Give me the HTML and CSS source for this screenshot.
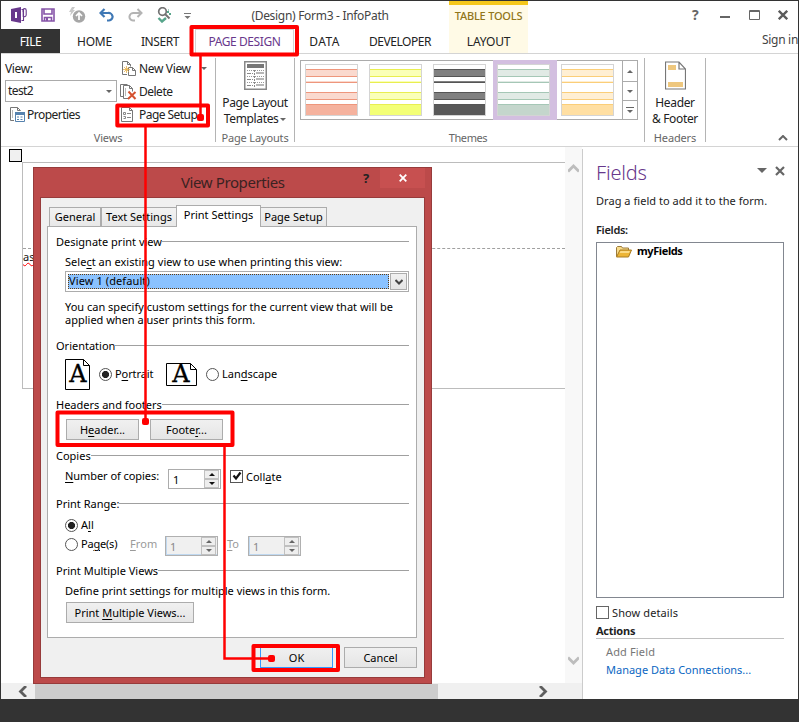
FILE: index.html
```html
<!DOCTYPE html>
<html lang="en">
<head>
<meta charset="utf-8">
<title>(Design) Form3 - InfoPath</title>
<link rel="stylesheet" href="styles.css">
</head>
<body>
<div class="window">
  <header class="titlebar">
    <div class="qat">
      <svg width="16" height="16" viewBox="0 0 16 16"><path d="M0 2l10-2v16L0 14z" fill="#68388c"/><path d="M4 5h2v6H4z" fill="#fff"/><path d="M10.5 2.500h2v11h-2M12 5V3.200a1.600 1.600 0 0 1 3.200 0V8a2 2 0 0 1-3 1.500V5" fill="none" stroke="#68388c" stroke-width="1.100"/></svg>
      <svg width="14" height="14" viewBox="0 0 14 14"><path d="M1 1h12v12H1zM3 1v5h8V1M3.500 13V9.500h7V13" fill="none" stroke="#8654a8" stroke-width="1.600"/><path d="M5 10h2v3H5z" fill="#8654a8"/></svg>
      <svg width="17" height="16" viewBox="0 0 17 16"><path d="M3 0L0 5h2L1 9l5-6H4l2-3z" fill="#c8c8c8"/><circle cx="10" cy="9.500" r="6.200" fill="#a6a6a6"/><path d="M10 13V6.500M7 9l3-3 3 3" fill="none" stroke="#fff" stroke-width="1.700"/></svg>
      <svg width="15" height="14" viewBox="0 0 15 14"><path d="M5.500 1L1.500 5l4 4M2 5h7a4 3.700 0 0 1 1 7.500H8" fill="none" stroke="#3f78b5" stroke-width="2.200"/></svg>
      <svg width="15" height="14" viewBox="0 0 15 14"><path d="M9.500 1l4 4-4 4M13 5H6a4 3.700 0 0 0-1 7.500h2" fill="none" stroke="#b4b4b4" stroke-width="2"/></svg>
      <svg width="15" height="16" viewBox="0 0 15 16"><circle cx="5.500" cy="4.500" r="3.800" fill="none" stroke="#737373" stroke-width="1.700"/><path d="M8 7l4.500 4.500" stroke="#737373" stroke-width="2"/><path d="M1.500 11l3.500 3.500L9 11" fill="none" stroke="#57a58b" stroke-width="2.400"/><path d="M10 4h2v2h-2zM12 6h2v2h-2zM11 2.500h1v1h-1z" fill="#57a58b"/></svg>
      <svg width="7" height="7" viewBox="0 0 7 7"><path d="M0 .5h7" stroke="#777"/><path d="M.5 3h6l-3 3z" fill="#777"/></svg>
    </div>
    <div class="caption">(Design) Form3 - InfoPath</div>
    <div class="tabletools">TABLE TOOLS</div>
    <div class="controls">
      <b>?</b>
      <svg width="10" height="10" viewBox="0 0 10 10"><path d="M0 7h10" stroke="#666" stroke-width="2"/></svg>
      <svg width="11" height="10" viewBox="0 0 11 10"><path d="M.5.500h10v9H.5zM.5 1.500h10" fill="none" stroke="#666"/></svg>
      <svg width="10" height="10" viewBox="0 0 10 10"><path d="M.8.800l8.400 8.400M9.200.800L.8 9.200" stroke="#5b5b5b" stroke-width="2.300"/></svg>
    </div>
  </header>
  <nav class="tabs">
    <span class="file">FILE</span><span class="home">HOME</span><span class="insert">INSERT</span><span class="active">PAGE DESIGN</span><span class="data">DATA</span><span class="dev">DEVELOPER</span><span class="layout">LAYOUT</span><span class="signin">Sign in</span>
  </nav>
  <section class="ribbon">
    <div class="group views">
      <div class="cols">
        <div class="left">
          <div class="row">View:</div>
          <div class="select">test2<i class="tri"></i></div>
          <div class="row props"><svg width="15" height="15" viewBox="0 0 15 15"><path d="M4 13.500H.5V.500h7l3 3M7.500.500v3h3M2 4h1M2 6h1M2 8h1M2 10h1" fill="none" stroke="#777"/><path d="M5.500 5.500h9v9h-9z" fill="#fff" stroke="#5682ae"/><path d="M5 5h10v3H5z" fill="#5682ae"/><path d="M7 10h2M10.500 10h2M7 12.500h2M10.500 12.500h2" stroke="#5682ae"/></svg>Properties</div>
        </div>
        <div class="right">
          <div class="row"><svg width="15" height="15" viewBox="0 0 15 15"><path d="M6 13.500H1.500V.500h5l3 3v2M6.500.500v3h3" fill="none" stroke="#777"/><path d="M7.500 6.500h4l3 3v5h-7zM11.500 6.500v3h3" fill="#fff" stroke="#777"/><path d="M5.500 5v7M2 8.500h7M3 6l5 5M8 6l-5 5" stroke="#e6b04a" stroke-width=".8"/></svg><span>New View</span><i class="tri nv"></i></div>
          <div class="row"><svg width="17" height="16" viewBox="0 0 17 16"><path d="M8 14.500H3.500V1.500h6l3 3v3M9.500 1.500v3h3M3 12.500H.5V.500h7M5 5h1M5 7h1M5 9h1M5 11h1" fill="none" stroke="#777"/><path d="M8.500 7.500l7 7.500M15.500 8L8 15" stroke="#d5522f" stroke-width="2"/></svg><span>Delete</span></div>
          <div class="row"><svg width="13" height="15" viewBox="0 0 13 15"><path d="M.5.500h8l3 3v11H.5zM8.500.500v3h3" fill="#fff" stroke="#777"/><path d="M2.500 5.500h2v2h-2zM2.500 9.500h2v2h-2M6 6.500h4M6 10.500h4" fill="none" stroke="#888"/></svg><span>Page Setup</span></div>
        </div>
      </div>
      <div class="label">Views</div>
    </div>
    <div class="group layouts">
      <div class="big"><svg width="23" height="29" viewBox="0 0 23 29"><path d="M.75.750h21.500v27.500H.75z" fill="#fff" stroke="#888" stroke-width="1.500"/><path d="M3 3h17v4H3z" fill="#777"/><path d="M3 9.500h17M3 15.500h17M3 21.500h17" stroke="#999" stroke-dasharray="1 1"/><path d="M12 11h8v2h-8zM12 17h8v2h-8zM12 23h8v2h-8z" fill="#b7b7b7"/><path d="M3 12.500h6M3 18.500h6M3 24.500h6" stroke="#888" stroke-dasharray="4 1"/><path d="M10.500 9v17" stroke="#888" stroke-dasharray="2 1"/></svg>
      <p>Page Layout<br>Templates <i class="tri"></i></p></div>
      <div class="label">Page Layouts</div>
    </div>
    <div class="group themes">
      <div class="gallery">
        <div class="item red"><div class="thumb"><i></i><i></i><i></i><i></i></div></div>
        <div class="item yellow"><div class="thumb"><i></i><i></i><i></i><i></i></div></div>
        <div class="item dark"><div class="thumb"><i></i><i></i><i></i><i></i></div></div>
        <div class="item green selected"><div class="thumb"><i></i><i></i><i></i><i></i></div></div>
        <div class="item orange"><div class="thumb"><i></i><i></i><i></i><i></i></div></div>
        <div class="scroller"><span><i class="tri up"></i></span><span><i class="tri"></i></span><span><i class="bar"></i><i class="tri"></i></span></div>
      </div>
      <div class="label">Themes</div>
    </div>
    <div class="group headers">
      <div class="big"><svg width="21" height="29" viewBox="0 0 21 29"><path d="M.5 1h13.500L20.500 8v20H.5zM14 1v7h6.500" fill="#fff" stroke="#777" stroke-width="1.200"/><path d="M3 4h8v5H3zM3 21h15v5H3z" fill="#eec77e"/></svg>
      <p>Header<br>&amp; Footer</p></div>
      <div class="label">Headers</div>
    </div>
    <div class="collapse"><svg width="10" height="6" viewBox="0 0 10 6"><path d="M1 5l4-4 4 4" fill="none" stroke="#666" stroke-width="2"/></svg></div>
  </section>
  <main class="work">
    <div class="canvas">
      <div class="handle"></div>
      <div class="page"><div class="pagetop"></div><div class="pagebody"><span>as</span></div></div>
    </div>
    <div class="vscroll">
      <svg width="11" height="9" viewBox="0 0 11 9"><path d="M0 7.500L5.500 2 11 7.500" fill="none" stroke="#bdbdbd" stroke-width="2.800"/></svg>
      <svg width="11" height="9" viewBox="0 0 11 9"><path d="M0 1.500L5.500 7 11 1.500" fill="none" stroke="#bdbdbd" stroke-width="2.800"/></svg>
    </div>
    <div class="hscroll">
      <svg width="9" height="11" viewBox="0 0 9 11"><path d="M8 0L2.500 5.500 8 11" fill="none" stroke="#5e5e5e" stroke-width="2.800"/></svg>
      <div class="hthumb"></div>
      <svg width="9" height="11" viewBox="0 0 9 11"><path d="M1 0l5.500 5.500L1 11" fill="none" stroke="#5e5e5e" stroke-width="2.800"/></svg>
    </div>
    <aside class="panel">
      <div class="phead"><h1>Fields</h1><i class="tri"></i><svg width="10" height="10" viewBox="0 0 10 10"><path d="M1 1l8 8M9 1L1 9" stroke="#666" stroke-width="2.200"/></svg></div>
      <p class="hint">Drag a field to add it to the form.</p>
      <p class="flabel">Fields:</p>
      <div class="tree"><svg width="16" height="13" viewBox="0 0 16 13"><path d="M.5 11.500v-9l1-1h4l1 1.500h6v3" fill="#f8dc8c" stroke="#9c7b3b"/><path d="M.5 12L4 5h11.500l-3 7z" fill="#edb536" stroke="#a97c22"/><path d="M4.500 6H14l-1 2H3.500z" fill="#fbdb86"/></svg><b>myFields</b></div>
      <label class="details"><i></i>Show details</label>
      <h2>Actions</h2>
      <p class="add">Add Field</p>
      <p class="manage">Manage Data Connections...</p>
    </aside>
  </main>
</div>

<div class="dialog">
  <div class="dtitle"><span class="dname">View Properties</span><b>?</b><span class="dclose"><svg width="8" height="8" viewBox="0 0 8 8"><path d="M.7.700l6.600 6.600M7.300.700L.7 7.300" stroke="#fff" stroke-width="1.800"/></svg></span></div>
  <div class="dbody">
    <div class="dtabs"><span class="t1">General</span><span class="t2">Text Settings</span><span class="t3">Print Settings</span><span class="t4">Page Setup</span></div>
    <div class="sheet">
      <section class="s1">
        <h3>Designate print view</h3>
        <p>Sele<u>c</u>t an existing view to use when printing this view:</p>
        <div class="combo"><span>View 1 (default)</span><i><svg width="8" height="6" viewBox="0 0 8 6"><path d="M.5 1L4 4.500 7.500 1" fill="none" stroke="#444" stroke-width="2"/></svg></i></div>
        <p class="info">You can specify custom settings for the current view that will be<br>applied when a user prints this form.</p>
      </section>
      <section class="s2">
        <h3>Orientation</h3>
        <div class="line">
          <svg width="25" height="31" viewBox="0 0 25 31"><path d="M.5.500h18l6 6v24H.5zM18.500.500v6h6" fill="#fff" stroke="#000"/><text x="12.800" y="23" class="glyph">A</text></svg>
          <i class="radio on"></i><span class="portrait">P<u>o</u>rtrait</span>
          <svg width="31" height="23" viewBox="0 0 31 23"><path d="M.5.500h24l6 6v16H.5zM24.500.500v6h6" fill="#fff" stroke="#000"/><text x="14.800" y="19" class="glyph">A</text></svg>
          <i class="radio"></i><span>Lan<u>d</u>scape</span>
        </div>
      </section>
      <section class="s3">
        <h3>Headers and footers</h3>
        <div class="line"><button>H<u>e</u>ader...</button><button>Foote<u>r</u>...</button></div>
      </section>
      <section class="s4">
        <h3>Copies</h3>
        <div class="line"><span class="copies"><u>N</u>umber of copies:</span><span class="spin">1<em><i class="tri up"></i><i class="tri"></i></em></span><i class="check"><svg width="10" height="10" viewBox="0 0 10 10"><path d="M1.500 4.500l2.500 3 4.500-6" fill="none" stroke="#111" stroke-width="2.200"/></svg></i><span class="collate">Coll<u>a</u>te</span></div>
      </section>
      <section class="s5">
        <h3>Print Range:</h3>
        <div class="line all"><i class="radio on"></i><span>A<u>l</u>l</span></div>
        <div class="line pages"><i class="radio"></i><span class="pg">Pa<u>g</u>e(s)</span><span class="dim from"><u>F</u>rom</span><span class="spin off">1<em><i class="tri up"></i><i class="tri"></i></em></span><span class="dim to"><u>T</u>o</span><span class="spin off">1<em><i class="tri up"></i><i class="tri"></i></em></span></div>
      </section>
      <section class="s6">
        <h3>Print Multiple Views</h3>
        <p>Define print settings for multiple views in this form.</p>
        <button>Print <u>M</u>ultiple Views...</button>
      </section>
    </div>
    <div class="buttons"><button class="ok">OK</button><button>Cancel</button></div>
  </div>
</div>

<svg class="callouts" width="799" height="722" viewBox="0 0 799 722">
  <g fill="none" stroke="#f00" stroke-width="4" stroke-linejoin="round">
    <rect x="191.500" y="27" width="105.500" height="27.500"/>
    <rect x="117.300" y="105.500" width="90.700" height="20"/>
    <rect x="57.500" y="412.500" width="175" height="32.500"/>
    <rect x="253.500" y="646" width="84.500" height="24"/>
  </g>
  <path d="M200.500 56v61M145.500 127v294M224.500 446v212.500H271" fill="none" stroke="#f00" stroke-width="2.500"/>
  <g fill="#f00"><rect x="197" y="114" width="7" height="7" rx="2"/><rect x="142" y="418" width="7" height="7" rx="2"/><rect x="268" y="655" width="7" height="7" rx="2"/></g>
</svg>
</body>
</html>
```
FILE: styles.css
```css
* { box-sizing: border-box; }
body { margin: 0; width: 799px; height: 722px; overflow: hidden; background: #333; font: 11px/14px "Noto Sans", "Open Sans", sans-serif; color: #000; position: relative; }
p, h1, h2, h3 { margin: 0; font: inherit; }
svg { display: block; flex: none; }
i { font-style: normal; flex: none; }
u { text-decoration: underline; text-underline-offset: 2px; text-decoration-thickness: 1px; }
.tri { display: inline-block; width: 0; height: 0; border: 3px solid transparent; border-top-color: #666; border-bottom: 0; }
.tri.up { border-top: 0; border-bottom: 3px solid #666; }

.window { height: 699px; background: #fff; border: 1px solid #333; border-bottom: 0; display: flex; flex-direction: column; color: #222; }

.titlebar { height: 28px; display: flex; flex: none; }
.qat { width: 190px; display: flex; align-items: center; padding-left: 10px; }
.qat svg:nth-child(2) { margin-left: 14px; }
.qat svg:nth-child(3) { margin-left: 14px; }
.qat svg:nth-child(4) { margin-left: 13px; }
.qat svg:nth-child(5) { margin-left: 14px; }
.qat svg:nth-child(6) { margin-left: 14px; }
.qat svg:nth-child(7) { margin: 2px 0 0 12px; }
.caption { width: 258px; text-align: center; font-size: 12px; letter-spacing: -.3px; line-height: 30px; color: #444; }
.tabletools { width: 79px; background: #fffae6; border-top: 4px solid #f5c71a; text-align: center; line-height: 22px; letter-spacing: -.2px; color: #917619; font-weight: 500; }
.controls { flex: 1; display: flex; align-items: center; padding-left: 164px; color: #666; }
.controls b { font-size: 14px; width: 28px; }
.controls svg:nth-of-type(2) { margin-left: 19px; }
.controls svg:nth-of-type(3) { margin-left: 18px; }

.tabs { height: 25px; flex: none; display: flex; border-bottom: 1px solid #d4d4d4; font-size: 12px; letter-spacing: -.2px; line-height: 25px; }
.tabs span { text-align: center; height: 24px; }
.tabs .file { width: 59px; background: #333; color: #fff; letter-spacing: -.5px; }
.home { width: 69px; }
.insert { width: 62px; letter-spacing: -.43px; }
.tabs .active { width: 99px; margin-left: 4px; height: 25px; background: #fff; border: 1px solid #d4d4d4; border-bottom: 0; line-height: 24px; color: #68388c; letter-spacing: -.42px; }
.data { width: 61px; letter-spacing: .4px; }
.dev { width: 90px; letter-spacing: -.46px; }
.layout { width: 79px; margin-left: 4px; background: #fffae6; }
.tabs .signin { flex: 1; text-align: right; line-height: 21px; letter-spacing: -.3px; color: #444; }

.ribbon { height: 93px; flex: none; display: flex; padding: 4px 0 0; border-bottom: 1px solid #d4d4d4; font-size: 12px; letter-spacing: -.35px; }
.group { height: 84px; border-right: 1px solid #b4b4b4; display: flex; flex-direction: column; }
.label { margin-top: auto; text-align: center; font-size: 11px; line-height: 9px; letter-spacing: -.15px; color: #666; }
.views { width: 215px; }
.cols { display: flex; }
.left { width: 116px; padding-left: 4px; }
.row { height: 23px; display: flex; align-items: center; gap: 3px; line-height: 16px; padding-bottom: 2px; }
.left .row:first-child { padding-bottom: 1px; }
.select { width: 112px; height: 22px; margin: -1px 0 2px; border: 1px solid #ababab; display: flex; align-items: center; justify-content: space-between; padding: 0 4px 0 2px; letter-spacing: -.6px; }
.props { padding-left: 5px; gap: 2px; letter-spacing: -.53px; }
.right { flex: 1; padding-left: 4px; }
.right .row:nth-child(2) { gap: 2px; margin-left: -1px; letter-spacing: -.5px; }
.right .row:nth-child(3) { gap: 5px; letter-spacing: -.55px; }
.right .nv { margin-left: 7px; }
.layouts { width: 79px; }
.big { text-align: center; }
.big svg { margin: 3px auto 5px; }
.big p { line-height: 16px; }
.big .tri { vertical-align: 2px; margin-left: -1px; }
.themes { width: 350px; padding: 2px 0 0 5px; }
.themes .label { letter-spacing: -.4px; padding-right: 8px; }
.gallery { width: 338px; height: 60px; border: 1px solid #ababab; display: flex; }
.item { width: 64px; height: 60px; margin-top: -1px; padding: 4px 6px 4px 4px; }
.item.selected { background: #d3bfe0; }
.thumb { width: 53px; height: 52px; border: 1px solid #d4d4d4; background: #fff; padding-top: 4px; display: flex; flex-direction: column; }
.thumb i { background: var(--light); border: solid var(--edge); border-width: 1px 0; }
.thumb i:nth-child(1) { height: 8px; margin-bottom: 4px; }
.thumb i:nth-child(2) { height: 2px; border-width: 0 0 1px; margin-bottom: 9px; }
.thumb i:nth-child(3) { height: 8px; margin-bottom: 4px; }
.thumb i:nth-child(4) { flex: 1; background: var(--full); border-width: 1px 0 0; }
.red { --light: #fad9ce; --edge: #ee967c; --full: #f5b29e; }
.yellow { --light: #faffb8; --edge: #e9ee50; --full: #f3ff75; }
.dark { --light: #808080; --edge: #555; --full: #595959; }
.green { --light: #e1eae5; --edge: #a5c7b6; --full: #c4d6cc; }
.orange { --light: #ffefd3; --edge: #fbce78; --full: #ffdfa2; }
.scroller { margin-left: auto; width: 15px; border-left: 1px solid #ababab; display: flex; flex-direction: column; }
.scroller span { flex: 1; display: flex; flex-direction: column; align-items: center; justify-content: center; gap: 2px; }
.scroller span:first-child { flex: none; height: 20px; }
.scroller span + span { border-top: 1px solid #ababab; }
.bar { width: 8px; height: 1px; background: #666; }
.headers { width: 61px; }
.collapse { flex: 1; display: flex; align-items: flex-end; justify-content: flex-end; padding: 0 10px 5px 0; }

.work { flex: 1; display: grid; grid-template: 536px 16px / 564px 17px 216px; }
.canvas { overflow: hidden; padding: 2px 0 0 8px; }
.handle { width: 13px; height: 13px; border: 1px solid #000; background: #f0f0f0; }
.page { margin-left: 13px; height: 227px; border: solid #bcbcbc; border-width: 1px 0 1px 1px; }
.pagetop { height: 86px; border-bottom: 1px dashed #a0a0a0; }
.pagebody { padding-top: 1px; color: #111; }
.pagebody span { text-decoration: underline wavy #f00 1px; text-underline-offset: 1px; }
.vscroll { background: #f8f8f8; display: flex; flex-direction: column; align-items: center; justify-content: space-between; padding: 17px 0 18px; }
.hscroll { grid-area: 2 / 1 / 3 / 3; background: #f0f0f0; display: flex; align-items: center; padding-left: 17px; }
.hthumb { width: 403px; height: 15px; background: #cdcdcd; margin: 0 101px 0 8px; }
.panel { grid-area: 1 / 3 / 3 / 4; border-left: 1px solid #ccc; margin-top: 2px; padding: 8px 14px 0 13px; }
.phead { display: flex; align-items: center; height: 32px; }
.phead h1 { font-size: 20px; font-weight: 300; letter-spacing: -.2px; color: #68388c; flex: 1; line-height: 32px; }
.phead .tri { border-width: 5px 5px 0; margin: -5px 8px 0 0; }
.phead svg { margin: -5px -1px 0 0; }
.hint { margin-top: 5px; letter-spacing: .04px; }
.flabel { margin-top: 15px; font-weight: 600; letter-spacing: -.3px; }
.tree { height: 356px; margin-top: 5px; border: 1px solid #828790; display: flex; align-items: flex-start; padding: 1px 0 0 19px; gap: 5px; color: #000; }
.tree svg { margin-top: 1px; }
.tree b { font-weight: 700; letter-spacing: -.4px; }
.details { display: flex; align-items: center; gap: 3px; margin-top: 7px; height: 15px; color: #222; letter-spacing: .1px; }
.details i { width: 13px; height: 13px; border: 1px solid #666; }
.panel h2 { font-weight: 700; letter-spacing: -.25px; line-height: 14px; height: 15px; margin-top: 4px; border-bottom: 1px solid #c0c0c0; color: #222; }
.add { color: #777; padding-left: 10px; margin-top: 6px; letter-spacing: .14px; }
.manage { color: #0a66c2; padding-left: 10px; margin-top: 4px; }

.dialog { position: absolute; left: 33px; top: 167px; width: 399px; height: 517px; background: #bc4a4a; border: 1px solid #973b3b; padding: 0 6px 6px; }
.dtitle { height: 29px; display: flex; }
.dname { padding-left: 141px; box-sizing: content-box; width: 147px; font-size: 15px; letter-spacing: -.4px; line-height: 29px; color: #3a2222; }
.dtitle b { font-size: 13px; line-height: 21px; width: 18px; padding-left: 35px; box-sizing: content-box; color: #222; }
.dclose { width: 45px; height: 20px; background: #c75050; display: flex; align-items: center; justify-content: center; margin-left: -1px; }
.dbody { height: 481px; border: 1px solid #973b3b; background: #f0f0f0; padding: 7px 7px 0 6px; }
.dtabs { height: 21px; display: flex; align-items: flex-end; padding-left: 2px; }
.dtabs span { height: 19px; border: 1px solid #acacac; border-bottom: 0; text-align: center; line-height: 17px; background: linear-gradient(#f2f2f2, #e8e8e8); }
.t1 { width: 52px; }
.t2 { width: 76px; }
.dtabs .t3 { width: 85px; height: 22px; margin: 0 0 -1px -1px; background: #fff; line-height: 18px; z-index: 1; }
.t4 { width: 67px; margin-left: -1px; }
.sheet { height: 412px; border: 1px solid #acacac; background: #fff; padding: 7px 7px 0 8px; }
h3 { display: flex; align-items: center; height: 16px; line-height: 16px; white-space: nowrap; }
h3::after { content: ""; flex: 1; height: 1px; background: #a0a0a0; margin-top: -1px; }
.sheet section > p, .sheet .line { margin-left: 9px; }
.line { display: flex; align-items: center; }
.s1 { height: 104px; }
.s1 p { margin-top: 5px; letter-spacing: .02px; }
.combo { width: 344px; height: 21px; margin: 2px 0 0 9px; border: 1px solid #acacac; display: flex; padding: 1px 1px 1px 2px; gap: 1px; }
.combo span { flex: 1; background: #8ac2ff; outline: 1px dotted #643c10; outline-offset: -1px; margin: 1px 0; line-height: 14px; padding-left: 1px; letter-spacing: .1px; }
.combo i { width: 17px; border: 1px solid #acacac; background: linear-gradient(#f0f0f0, #e5e5e5); display: flex; align-items: center; justify-content: center; }
.s1 .info { line-height: 13px; margin-top: 8px; letter-spacing: 0; }
.s2 { height: 59px; }
.s2 .line { height: 31px; margin-top: 5px; }
.s2 .line > span { margin-top: -1px; }
.glyph { font: 24px "DejaVu Serif", serif; text-anchor: middle; stroke: #000; stroke-width: .3px; }
.radio { width: 13px; height: 13px; border: 1px solid #555; border-radius: 50%; background: #fff; }
.radio.on { background: radial-gradient(circle, #222 0 3.200px, #fff 3.900px); }
.s2 .radio { margin: -1px 3px 0 9px; }
.portrait { width: 51px; letter-spacing: -.1px; }
.s3 { height: 51px; }
.s3 .line { margin: 6px 0 0 10px; gap: 11px; }
button { font: inherit; color: #000; height: 21px; width: 73px; border: 1px solid #acacac; background: linear-gradient(#f0f0f0, #e5e5e5); padding: 0; line-height: 19px; }
.s4 { height: 48px; }
.s4 .line { height: 20px; margin-top: 5px; }
.copies { width: 103px; margin-top: -6px; letter-spacing: -.06px; }
.spin { width: 53px; height: 20px; border: 1px solid #acacac; background: #fff; display: flex; justify-content: space-between; padding-left: 4px; line-height: 19px; }
.spin em { width: 16px; display: flex; flex-direction: column; }
.spin em .tri { width: 15px; height: 9px; border: 1px solid #c0c0c0; background: #eee; display: flex; align-items: center; justify-content: center; }
.spin em .tri::before { content: ""; border: 3px solid transparent; border-bottom: 0; border-top-color: #111; }
.spin em .up::before { border: 3px solid transparent; border-top: 0; border-bottom-color: #111; }
.spin.off { background: #f0f0f0; color: #888; border-color: #b0b0b0; box-shadow: inset 1px -1px #bfd8f0; }
.spin.off em .tri::before { border-top-color: #666; }
.spin.off em .up::before { border-bottom-color: #666; }
.s4 .spin { margin-top: 0; }
.check { width: 13px; height: 13px; border: 1px solid #555; margin: -5px 3px 0 9px; padding: 0 0 0 1px; }
.collate { margin-top: -5px; }
.s5 { height: 67px; }
.all { height: 19px; margin-top: 4px; }
.line.all span { margin-top: -2px; }
.all .radio, .pages .radio { margin-right: 3px; }
.pages { height: 20px; }
.pages > .radio { margin-top: -2px; }
.all > .radio { margin-top: -1px; }
.pg { width: 49px; letter-spacing: -.2px; margin-top: -2px; }
.dim { color: #9a9a9a; margin-top: -3px; }
.from { width: 35px; letter-spacing: .1px; }
.to { width: 21px; margin-left: 9px; }
.pages .spin { margin-top: 2px; }
.s6 p { margin-top: 5px; }
.s6 button { width: 128px; margin: 4px 0 0 10px; display: block; }
.buttons { display: flex; justify-content: flex-end; gap: 11px; margin-top: 9px; }
.ok { border-color: #3399ff; }
.callouts { position: absolute; left: 0; top: 0; }
```
